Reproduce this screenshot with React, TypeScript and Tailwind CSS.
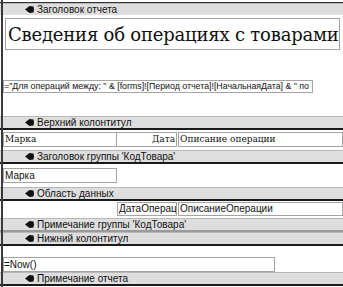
const Pointer = () => (
  <svg width="9" height="7" viewBox="0 0 9 7" className="shrink-0">
    <path d="M0 3.5 L4.5 0 L8.5 0.6 L9 3.5 L8.5 6.4 L4.5 7 Z" fill="#111" />
  </svg>
);

const Band = ({ label, line = true }: { label: string; line?: boolean }) => (
  <>
    <div className="h-[12px] bg-[#dedede] border-t border-[#b8b8b8] flex items-center gap-[3px] pl-[25px] text-[10px] leading-none text-[#111]">
      <Pointer />
      <span>{label}</span>
    </div>
    {line && <div className="h-[2px] bg-[#1a1a1a]" />}
  </>
);

const Box = ({ className, children }: { className: string; children?: React.ReactNode }) => (
  <div className={"border border-[#a4a4a4] bg-white overflow-hidden whitespace-nowrap " + className}>
    {children}
  </div>
);

export default function App() {
  return (
    <div className="w-[343px] h-[287px] bg-white overflow-hidden relative [font-family:'Liberation_Sans',Arial,sans-serif]">
      <div className="absolute left-[1px] top-0 bottom-0 w-[2px] bg-[#3a3a3a]" />
      <div className="flex flex-col pt-[2px]">
        <div className="h-[1px] bg-[#333]" />
        <Band label="Заголовок отчета" line={false} />
        {/* report header */}
        <div className="h-[101px] flex flex-col pl-[3px] pt-[3px]">
          <Box className="ml-[2px] mr-[3px] h-[32px] flex items-center pl-[2px] text-[18px] tracking-[-0.2px] text-[#111] [font-family:'DejaVu_Serif',serif]">
            Сведения об операциях с товарами
          </Box>
          <Box className="mt-[30px] w-[310px] h-[13px] flex items-center text-[8.8px] leading-none text-[#111]">
            ="Для операций между: " &amp; [forms]![Период отчета]![НачальнаяДата] &amp; " по
          </Box>
        </div>
        <Band label="Верхний колонтитул" />
        <div className="h-[20px] flex items-start pl-[3px] pt-[2px] text-[9px] leading-none [font-family:'DejaVu_Serif',serif] text-[#111]">
          <Box className="w-[114px] h-[15px] flex items-center pl-[1px]">Марка</Box>
          <Box className="w-[60px] h-[15px] flex items-center justify-end pr-[1px] border-l-0">Дата</Box>
          <Box className="ml-[1px] flex-1 h-[15px] flex items-center pl-[1px]">Описание операции</Box>
        </div>
        <Band label="Заголовок группы 'КодТовара'" />
        <div className="h-[23px] pl-[3px] pt-[4px] text-[10px] leading-none text-[#111]">
          <Box className="w-[114px] h-[15px] flex items-center pl-[1px]">Марка</Box>
        </div>
        <Band label="Область данных" />
        <div className="h-[17px] flex items-start pl-[117px] pt-[1px] text-[10px] leading-none text-[#111]">
          <Box className="w-[60px] h-[14px] flex items-center pl-[1px]">ДатаОперац</Box>
          <Box className="ml-[1px] flex-1 h-[14px] flex items-center pl-[1px]">ОписаниеОперации</Box>
        </div>
        <Band label="Примечание группы 'КодТовара'" line={false} />
        <div className="h-[2px] bg-[#9a9a9a]" />
        <Band label="Нижний колонтитул" />
        <div className="h-[26px] pl-[3px] pt-[11px] text-[10px] leading-none text-[#111]">
          <Box className="w-[272px] h-[15px] flex items-center">=Now()</Box>
        </div>
        <Band label="Примечание отчета" />
      </div>
    </div>
  );
}
